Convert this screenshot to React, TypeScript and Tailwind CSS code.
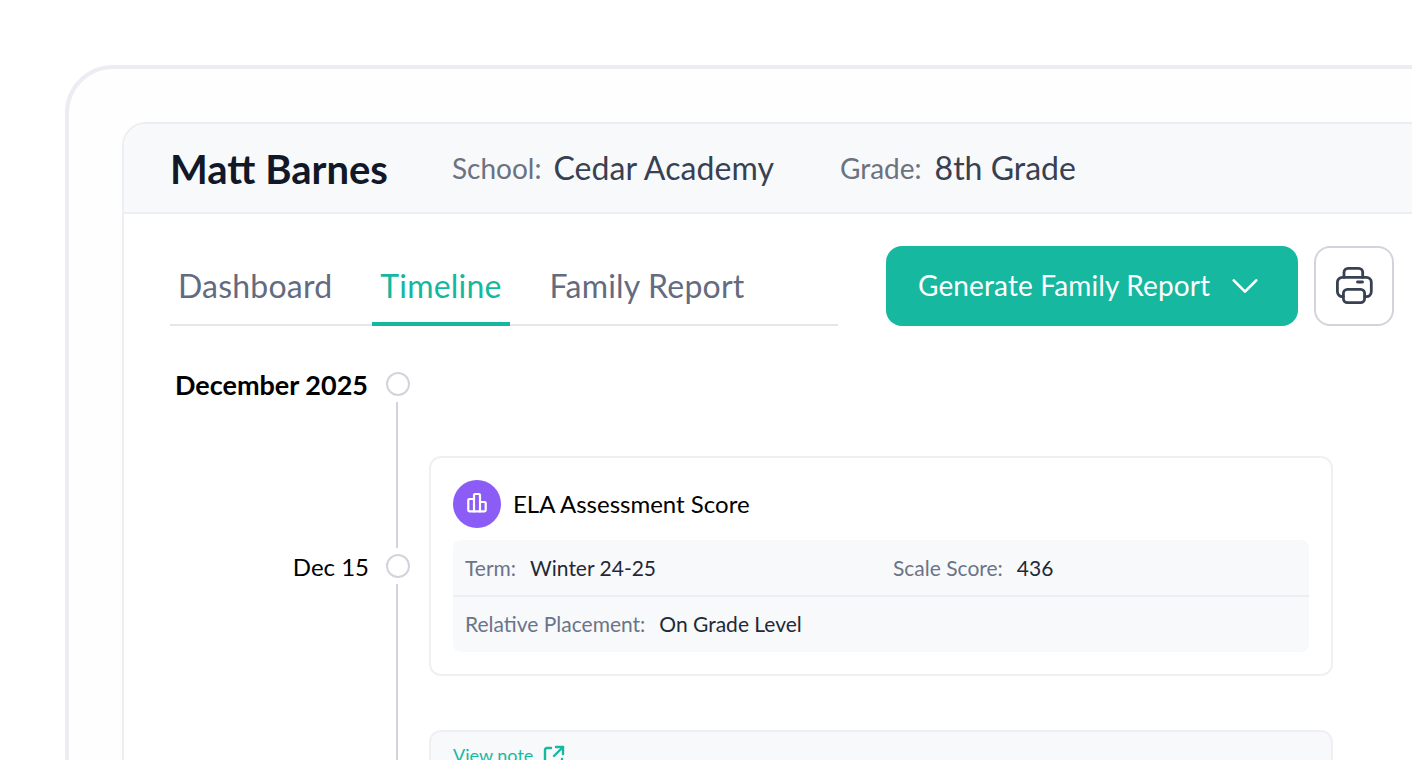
const tabs = ['Dashboard', 'Timeline', 'Family Report'];

function Dot() {
    return <div className="w-6 h-6 rounded-full border-2 border-[#d1d5db] bg-white shrink-0" />;
}

function Field({ label, value }: { label: string; value: string }) {
    return (
        <div className="flex items-center gap-[14px] text-[21px] leading-[28px] -mt-[2px]">
            <span className="text-[#6b7488]">{label}</span>
            <span className="text-[#1f2937]">{value}</span>
        </div>
    );
}

export default function App() {
    return (
        <div className="h-[760px] w-[1412px] overflow-hidden bg-white font-['Lato',sans-serif] pl-[65px] pt-[65px]">
            <div className="w-[1500px] h-[900px] border-4 border-[#ecedf2] rounded-tl-[48px] bg-[#fefeff] pl-[53px] pt-[53px]">
                <div className="w-[1400px] h-[800px] border-2 border-[#eceef2] rounded-tl-[24px] bg-white overflow-hidden">
                    {/* Header */}
                    <div className="h-[90px] bg-[#f8f9fb] border-b-2 border-[#eceef2] flex items-center pl-[46px]">
                        <h1 className="text-[40px] font-bold text-[#111827] w-[282px] pt-[1px]">Matt Barnes</h1>
                        <div className="flex items-center gap-[12px] w-[388px]">
                            <span className="text-[28px] text-[#6b7280]">School:</span>
                            <span className="text-[32px] text-[#374151] tracking-[0.08px]">Cedar Academy</span>
                        </div>
                        <div className="flex items-center gap-[13px]">
                            <span className="text-[28px] text-[#6b7280]">Grade:</span>
                            <span className="text-[32px] text-[#374151]">8th Grade</span>
                        </div>
                    </div>

                    <div className="pl-[46px] pt-8">
                        {/* Tabs and actions */}
                        <div className="flex items-end">
                            <div className="w-[668px] h-20 border-b-2 border-[#e5e7eb] flex items-end">
                                {tabs.map((tab) => (
                                    <div
                                        key={tab}
                                        className={`h-[80px] -mb-[2px] px-2 mr-[32px] pt-1 flex items-center border-b-4 text-[32px] tracking-[0.2px] ${tab === 'Timeline'
                                                ? 'border-[#14b8a0] text-[#14b8a0]'
                                                : 'border-transparent text-[#636b80]'
                                            }`}
                                    >
                                        {tab}
                                    </div>
                                ))}
                            </div>
                            <button className="ml-12 w-[412px] h-20 rounded-2xl bg-[#16b8a0] text-white text-[28px] tracking-[0.13px] flex items-center pl-8">
                                <span className="-mt-[2px]">Generate Family Report</span>
                                <svg className="ml-[17px]" width="36" height="36" viewBox="0 0 24 24" fill="none" stroke="currentColor" strokeWidth="1.8" strokeLinecap="round" strokeLinejoin="round">
                                    <path d="M19.5 8.25 12 15.75 4.5 8.25" />
                                </svg>
                            </button>
                            <button className="ml-4 w-20 h-20 rounded-2xl border-2 border-[#d1d5db] bg-white flex items-center justify-center text-[#374151]">
                                <svg width="40" height="40" viewBox="0 0 40 40" fill="none" stroke="currentColor" strokeWidth="2.8" strokeLinecap="round" strokeLinejoin="round">
                                    <path d="M10 11.4V6.4a4 4 0 0 1 4-4h10.7a4 4 0 0 1 4 4v5" />
                                    <path d="M9.4 30.6h-1a5 5 0 0 1-5-5v-9.2a5 5 0 0 1 5-5h23.9a5 5 0 0 1 5 5v9.2a5 5 0 0 1-5 5h-1.7" />
                                    <rect x="9.4" y="23.4" width="21.2" height="13.2" rx="4" />
                                    <path d="M23.5 16h5" />
                                </svg>
                            </button>
                        </div>

                        {/* Timeline */}
                        <div className="flex mt-[46px]">
                            <div className="w-[240px] shrink-0 flex flex-col items-end">
                                <div className="flex items-center gap-[18px] h-6">
                                    <span className="text-[27px] font-bold text-black pt-[2px]">December 2025</span>
                                    <Dot />
                                </div>
                                <div className="w-[2px] h-[146px] bg-[#d1d5db] my-[6px] mr-[12px]" />
                                <div className="flex items-center gap-[17px] h-6">
                                    <span className="text-[24px] text-black pt-[2px]">Dec 15</span>
                                    <Dot />
                                </div>
                                <div className="w-[2px] h-[200px] bg-[#d1d5db] mt-[6px] mr-[12px]" />
                            </div>

                            <div className="ml-[19px] w-[904px] pt-[84px]">
                                <div className="h-[220px] border-2 border-[#eef0f3] rounded-xl bg-white px-[22px] pt-[22px]">
                                    <div className="flex items-center gap-[12px]">
                                        <div className="w-12 h-12 rounded-full bg-[#8b5cf6] flex items-center justify-center text-white">
                                            <svg width="24" height="24" viewBox="0 1 24 24" fill="none" stroke="currentColor" strokeWidth="2.2" strokeLinecap="round" strokeLinejoin="round">
                                                <path d="M9 20.3H4.3a1 1 0 0 1-1-1V9a1 1 0 0 1 1-1H9" />
                                                <path d="M9 20.3V4a1 1 0 0 1 1-1h4a1 1 0 0 1 1 1v16.3" />
                                                <path d="M9 20.3h6" />
                                                <path d="M15 11h4.7a1 1 0 0 1 1 1v7.3a1 1 0 0 1-1 1H15" />
                                            </svg>
                                        </div>
                                        <span className="text-[24px] text-black">ELA Assessment Score</span>
                                    </div>
                                    <div className="mt-3 h-[112px] rounded-lg bg-[#f8f9fb]">
                                        <div className="h-[57px] border-b-2 border-[#eceef2] flex items-center pl-3 pt-[2px]">
                                            <div className="w-[428px]">
                                                <Field label="Term:" value="Winter 24-25" />
                                            </div>
                                            <Field label="Scale Score:" value="436" />
                                        </div>
                                        <div className="h-[55px] flex items-center pl-3">
                                            <Field label="Relative Placement:" value="On Grade Level" />
                                        </div>
                                    </div>
                                </div>

                                <div className="mt-[54px] h-[120px] border-2 border-[#eef0f3] rounded-xl bg-[#f8f9fb] pl-[22px] pt-[10px]">
                                    <div className="flex items-center gap-[10px] text-[#16b8a0] text-[18px] leading-6">
                                        View note
                                        <svg className="mt-[3px]" width="22" height="22" viewBox="0 0 22 22" fill="none" stroke="currentColor" strokeWidth="2.4" strokeLinecap="round" strokeLinejoin="round">
                                            <path d="M8 3H4a2 2 0 0 0-2 2v13a2 2 0 0 0 2 2h13a2 2 0 0 0 2-2v-4" />
                                            <path d="M11 11l9-9" />
                                            <path d="M13 2h7v7" />
                                        </svg>
                                    </div>
                                </div>
                            </div>
                        </div>
                    </div>
                </div>
            </div>
        </div>
    );
}
